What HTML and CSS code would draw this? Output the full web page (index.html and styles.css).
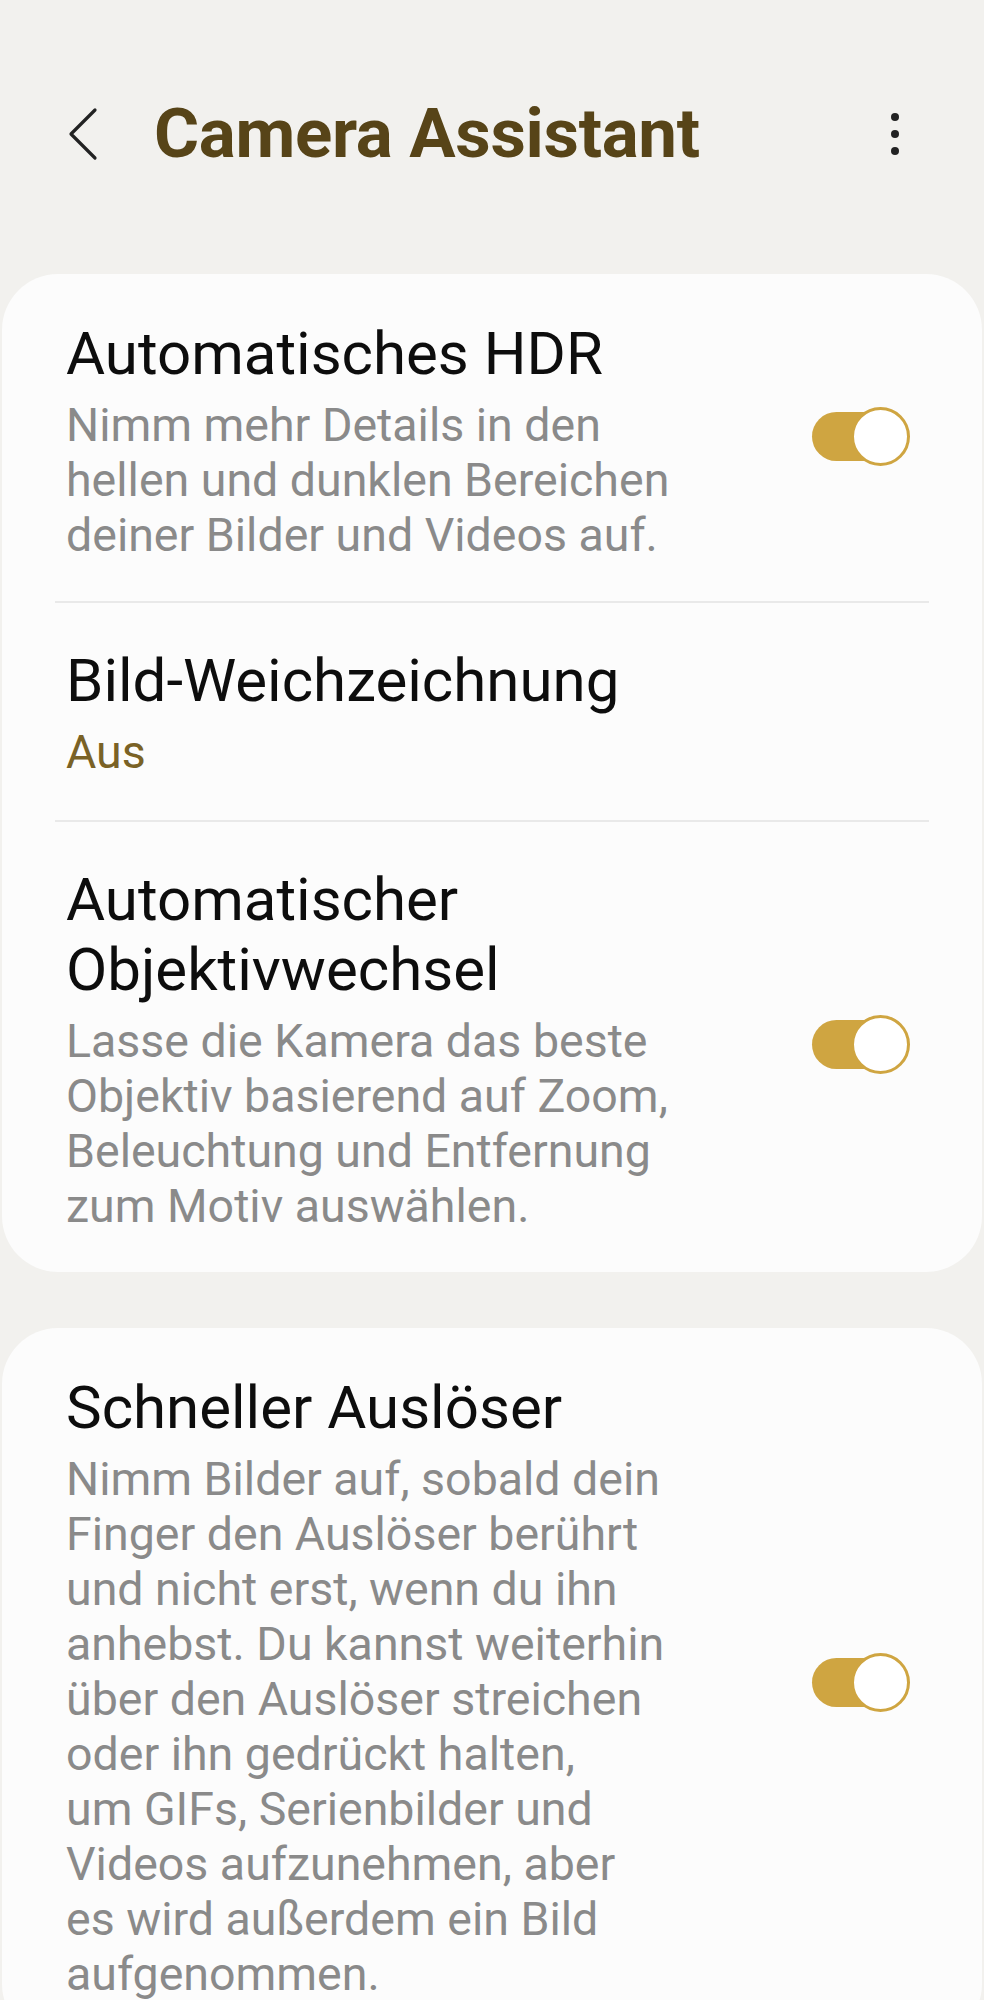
FILE: index.html
```html
<!DOCTYPE html>
<html lang="de">
<head>
<meta charset="utf-8">
<title>Camera Assistant</title>
<link rel="stylesheet" href="styles.css">
</head>
<body>
<header class="appbar">
  <button class="back" aria-label="Zurück">
    <svg width="36" height="56" viewBox="0 0 36 56"><path d="M28 4 L4 28 L28 52" fill="none" stroke="#222" stroke-width="3.2" stroke-linecap="round" stroke-linejoin="round"/></svg>
  </button>
  <h1 class="title">Camera Assistant</h1>
  <button class="more" aria-label="Weitere Optionen">
    <span class="dot"></span><span class="dot"></span><span class="dot"></span>
  </button>
</header>
<main class="content">
  <section class="card">
    <div class="item">
      <div class="text">
        <div class="item-title">Automatisches HDR</div>
        <div class="item-desc">Nimm mehr Details in den<br>hellen und dunklen Bereichen<br>deiner Bilder und Videos auf.</div>
      </div>
      <div class="switch on"><span class="track"></span><span class="thumb"></span></div>
    </div>
    <div class="divider"></div>
    <div class="item">
      <div class="text">
        <div class="item-title">Bild-Weichzeichnung</div>
        <div class="item-value">Aus</div>
      </div>
    </div>
    <div class="divider"></div>
    <div class="item">
      <div class="text">
        <div class="item-title">Automatischer<br>Objektivwechsel</div>
        <div class="item-desc">Lasse die Kamera das beste<br>Objektiv basierend auf Zoom,<br>Beleuchtung und Entfernung<br>zum Motiv auswählen.</div>
      </div>
      <div class="switch on"><span class="track"></span><span class="thumb"></span></div>
    </div>
  </section>
  <section class="card">
    <div class="item">
      <div class="text">
        <div class="item-title">Schneller Auslöser</div>
        <div class="item-desc">Nimm Bilder auf, sobald dein<br>Finger den Auslöser berührt<br>und nicht erst, wenn du ihn<br>anhebst. Du kannst weiterhin<br>über den Auslöser streichen<br>oder ihn gedrückt halten,<br>um GIFs, Serienbilder und<br>Videos aufzunehmen, aber<br>es wird außerdem ein Bild<br>aufgenommen.</div>
      </div>
      <div class="switch on"><span class="track"></span><span class="thumb"></span></div>
    </div>
  </section>
</main>
</body>
</html>
```

FILE: styles.css
```css
html, body {
  margin: 0;
  padding: 0;
}

body {
  background: #f2f1ee;
  font-family: Roboto, "Noto Sans", sans-serif;
  color: #111;
}

.appbar {
  display: flex;
  align-items: center;
  height: 80px;
  padding: 94px 0 0 0;
}

.back {
  display: flex;
  align-items: center;
  justify-content: center;
  width: 36px;
  height: 56px;
  margin-left: 67px;
  padding: 0;
  border: 0;
  background: none;
}

.title {
  margin: 0 0 0 51px;
  font-size: 69px;
  line-height: 80px;
  font-weight: 700;
  color: #574418;
  letter-spacing: -0.3px;
  flex: 1;
}

.more {
  display: flex;
  flex-direction: column;
  align-items: center;
  gap: 9px;
  width: 20px;
  margin-right: 79px;
  padding: 0;
  border: 0;
  background: none;
}

.dot {
  width: 8px;
  height: 8px;
  border-radius: 50%;
  background: #222;
}

.content {
  display: flex;
  flex-direction: column;
  gap: 56px;
  padding-top: 100px;
}

.card {
  background: #fcfcfc;
  border-radius: 56px;
  margin: 0 2px;
}

.item {
  display: flex;
  align-items: center;
  padding: 43px 72px 40px 64px;
}

.card > .item:first-child {
  padding-top: 45px;
  padding-bottom: 38px;
}

.card > .item:last-child {
  padding-bottom: 38px;
}

.text {
  flex: 1;
  min-width: 0;
}

.item-title {
  font-size: 60px;
  line-height: 70px;
  color: #0d0d0d;
}

.item-desc {
  margin-top: 9px;
  font-size: 46.5px;
  line-height: 55px;
  color: #8a8a8a;
}

.item-value {
  margin-top: 9px;
  font-size: 46.5px;
  line-height: 55px;
  color: #7a6226;
}

.divider {
  height: 2px;
  margin: 0 53px;
  background: #e9e9e9;
}

.switch {
  position: relative;
  width: 98px;
  height: 59px;
  flex: none;
  margin-bottom: 10px;
}

.track {
  position: absolute;
  left: 0;
  top: 5px;
  width: 90px;
  height: 49px;
  border-radius: 25px;
  background: #cfa541;
}

.thumb {
  position: absolute;
  right: 0;
  top: 0;
  width: 53px;
  height: 53px;
  border-radius: 50%;
  background: #fff;
  border: 3px solid #cfa541;
}
```
